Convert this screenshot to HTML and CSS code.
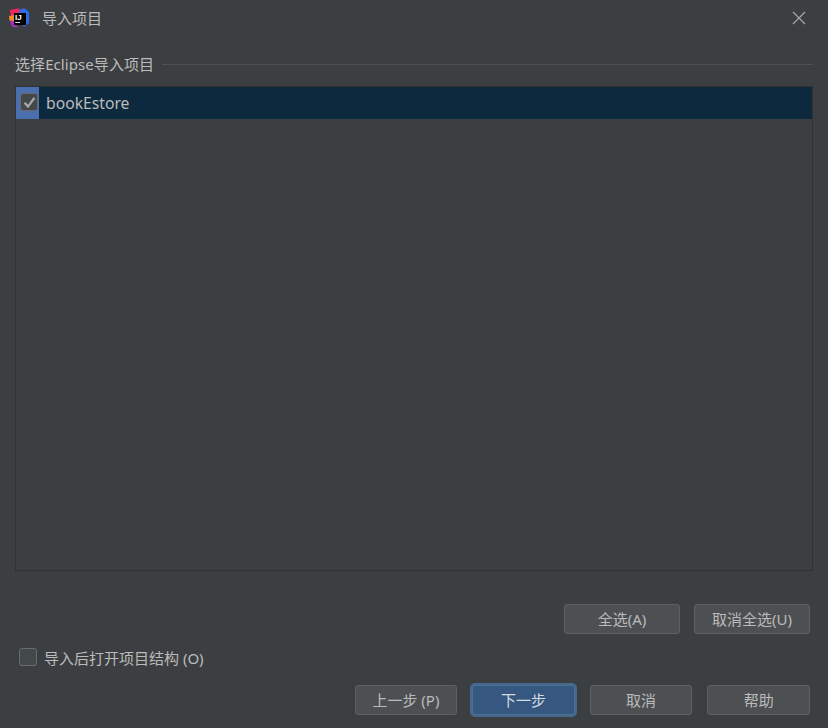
FILE: index.html
```html
<!DOCTYPE html>
<html lang="zh">
<head>
<meta charset="utf-8">
<title>导入项目</title>
<link rel="stylesheet" href="styles.css">
</head>
<body>
<div class="dialog">
  <header class="titlebar">
    <svg class="logo" width="20" height="20" viewBox="0 0 20 20" aria-hidden="true">
      <path d="M0.8 2 L10 0.2 L12 8 L3 12 Z" fill="#f0265f"/>
      <path d="M11 1.2 L15.5 0.2 L20 4 L20 15 L15 19 L9 10 Z" fill="#2f6be8"/>
      <path d="M1 11 L5 9 L5 16 L10 19.5 L3.5 19 L1.5 15 Z" fill="#a32fc4"/>
      <path d="M0 8 L5 7 L5 13 L0.5 12.5 Z" fill="#f78a1e"/>
      <rect x="5" y="5" width="12" height="12" fill="#000"/>
      <text x="6" y="11.8" class="logo-text">IJ</text>
      <rect x="6.2" y="14" width="5" height="1" fill="#ddd"/>
    </svg>
    <span class="title">导入项目</span>
    <svg class="close" width="14" height="14" viewBox="0 0 14 14" aria-hidden="true">
      <path d="M1 1 L13 13 M13 1 L1 13" stroke="#a5a7a8" stroke-width="1.2" fill="none"/>
    </svg>
  </header>
  <main class="content">
    <div class="section">
      <span class="section-label">选择Eclipse导入项目</span>
      <span class="section-line"></span>
    </div>
    <div class="list">
      <div class="row">
        <div class="row-check">
          <span class="checkbox">
            <svg width="13" height="13" viewBox="0 0 13 13" aria-hidden="true">
              <path d="M1.6 6.8 L5 10.6 L11.4 1.8" stroke="#a9abac" stroke-width="2.2" fill="none"/>
            </svg>
          </span>
        </div>
        <span class="row-label">bookEstore</span>
      </div>
    </div>
    <div class="select-actions">
      <button class="btn wide">全选(A)</button>
      <button class="btn wide">取消全选(U)</button>
    </div>
    <label class="open-structure">
      <span class="checkbox"></span>
      <span>导入后打开项目结构 (O)</span>
    </label>
  </main>
  <footer class="footer">
    <button class="btn">上一步 (P)</button>
    <button class="btn primary">下一步</button>
    <button class="btn">取消</button>
    <button class="btn">帮助</button>
  </footer>
</div>
</body>
</html>
```
FILE: styles.css
```css
* { box-sizing: border-box; }
html, body { margin: 0; padding: 0; }
body {
  width: 828px;
  height: 728px;
  overflow: hidden;
  background: #3c3f41;
  color: #bbbbbb;
  font-family: "Noto Sans", "Noto Sans CJK SC", sans-serif;
  font-size: 15px;
}
.dialog {
  display: flex;
  flex-direction: column;
  height: 728px;
}
.titlebar {
  display: flex;
  align-items: center;
  height: 36px;
  padding: 0 22px 0 9px;
  flex: none;
}
.logo { flex: none; }
.logo-text {
  font-family: "Liberation Sans", sans-serif;
  font-size: 8px;
  font-weight: 700;
  fill: #fff;
}
.title {
  margin-left: 13px;
  flex: 1;
  line-height: 20px;
}
.content {
  display: flex;
  flex-direction: column;
  flex: 1;
  padding: 18px 15px 0;
}
.section {
  display: flex;
  align-items: center;
  height: 20px;
}
.section-label { flex: none; line-height: 20px; letter-spacing: 0.08px; }
.section-line {
  flex: 1;
  height: 1px;
  margin-left: 8px;
  background: #4f5254;
}
.list {
  margin-top: 12px;
  height: 485px;
  border: 1px solid #2f3133;
  background: #3c3f41;
}
.row {
  display: flex;
  align-items: center;
  height: 32px;
  background: #0d293e;
}
.row-check {
  display: flex;
  align-items: center;
  justify-content: center;
  width: 23px;
  height: 32px;
  padding: 0 0 2px 3px;
  background: #4b6eaf;
}
.row-label {
  margin-left: 7px;
  font-size: 15.7px;
  line-height: 20px;
}
.checkbox {
  display: flex;
  align-items: center;
  justify-content: center;
  width: 18px;
  height: 18px;
  border: 1px solid #6b6b6b;
  border-radius: 3px;
  background: #43494a;
  flex: none;
}
.select-actions {
  display: flex;
  justify-content: flex-end;
  gap: 14px;
  margin-top: 33px;
  padding-right: 3px;
}
.open-structure {
  display: flex;
  align-items: center;
  gap: 7px;
  margin-top: 13px;
  padding-left: 4px;
  height: 20px;
}
.btn {
  display: flex;
  align-items: center;
  justify-content: center;
  width: 102.6px;
  height: 30px;
  padding: 0;
  border: 1px solid #5e6060;
  border-radius: 3px;
  background: #4c5052;
  color: #bbbbbb;
  font: inherit;
  line-height: 20px;
}
.btn.wide { width: 116px; }
.btn.primary {
  background: #365880;
  border: 1px solid #4c708c;
  color: #d4dbe2;
  box-shadow: 0 0 0 2px #46688f;
}
.footer {
  display: flex;
  justify-content: flex-end;
  flex: none;
  gap: 15px;
  padding: 0 18px 13px 0;
}
```
